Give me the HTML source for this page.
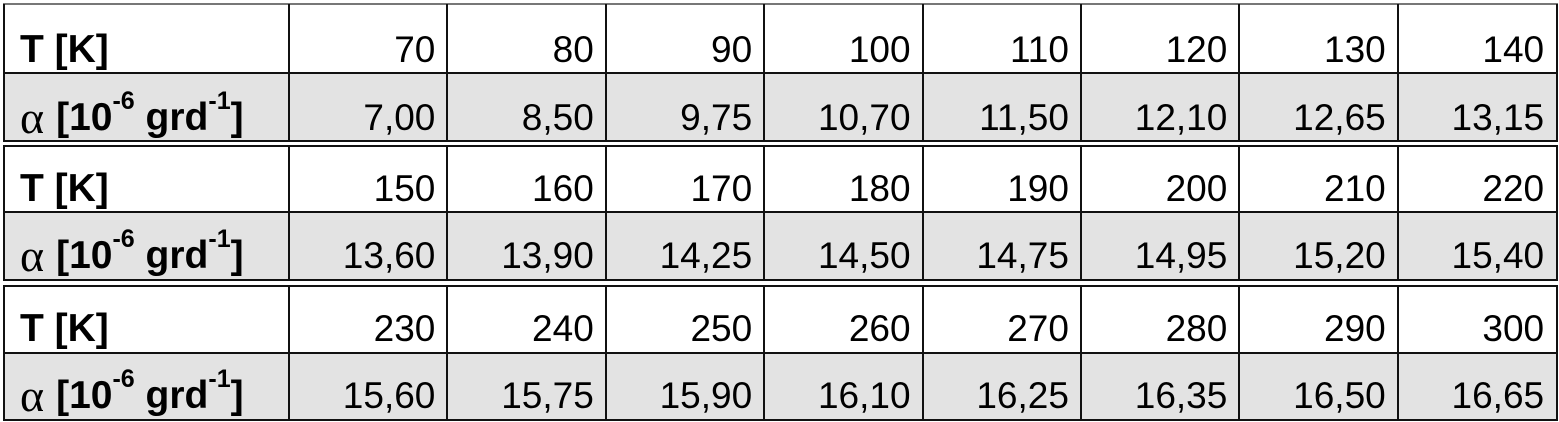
<!DOCTYPE html>
<html><head><meta charset="utf-8"><style>
*{margin:0;padding:0;box-sizing:border-box}
body{width:1559px;height:422px;background:#fff;position:relative;overflow:hidden;font-family:"Liberation Sans",Arial,sans-serif;color:#000}
.r{position:absolute;left:3px;width:1555px;display:flex;border-left:2px solid #111;border-right:2px solid #111}
.c{flex:0 0 158.4px;border-left:2px solid #111;display:flex;align-items:flex-end;justify-content:flex-end;padding:0 11px 5px 0;font-size:37px;line-height:37px;white-space:nowrap}
.l{flex:0 0 283px;border-left:none;justify-content:flex-start;padding-left:15px;font-weight:bold;font-size:39px}
.g{background:#e3e3e3}
.h{position:absolute;left:3px;width:1555px;height:2px;background:#111}
.a{font-family:"Liberation Serif",serif;font-weight:normal;font-size:46px;margin-right:12px}
.s{position:relative;top:-16px;font-size:25px}
</style></head><body>
<div class="h" style="top:3px;background:#777"></div>
<div class="r" style="top:4px;height:69px"><div class="c l">T [K]</div><div class="c">70</div><div class="c">80</div><div class="c">90</div><div class="c">100</div><div class="c">110</div><div class="c">120</div><div class="c">130</div><div class="c">140</div></div>
<div class="h" style="top:72px"></div>
<div class="r g" style="top:74px;height:67px"><div class="c l"><span class="a">α</span>[10<span class="s">-6</span>&nbsp;grd<span class="s">-1</span>]</div><div class="c">7,00</div><div class="c">8,50</div><div class="c">9,75</div><div class="c">10,70</div><div class="c">11,50</div><div class="c">12,10</div><div class="c">12,65</div><div class="c">13,15</div></div>
<div class="h" style="top:140px"></div><div class="h" style="top:145px"></div>
<div class="r" style="top:147px;height:65px"><div class="c l">T [K]</div><div class="c">150</div><div class="c">160</div><div class="c">170</div><div class="c">180</div><div class="c">190</div><div class="c">200</div><div class="c">210</div><div class="c">220</div></div>
<div class="h" style="top:211px"></div>
<div class="r g" style="top:213px;height:66px"><div class="c l"><span class="a">α</span>[10<span class="s">-6</span>&nbsp;grd<span class="s">-1</span>]</div><div class="c">13,60</div><div class="c">13,90</div><div class="c">14,25</div><div class="c">14,50</div><div class="c">14,75</div><div class="c">14,95</div><div class="c">15,20</div><div class="c">15,40</div></div>
<div class="h" style="top:279px"></div><div class="h" style="top:285px"></div>
<div class="r" style="top:287px;height:65px"><div class="c l">T [K]</div><div class="c">230</div><div class="c">240</div><div class="c">250</div><div class="c">260</div><div class="c">270</div><div class="c">280</div><div class="c">290</div><div class="c">300</div></div>
<div class="h" style="top:352px"></div>
<div class="r g" style="top:354px;height:65px"><div class="c l"><span class="a">α</span>[10<span class="s">-6</span>&nbsp;grd<span class="s">-1</span>]</div><div class="c">15,60</div><div class="c">15,75</div><div class="c">15,90</div><div class="c">16,10</div><div class="c">16,25</div><div class="c">16,35</div><div class="c">16,50</div><div class="c">16,65</div></div>
<div class="h" style="top:419px"></div>
</body></html>
